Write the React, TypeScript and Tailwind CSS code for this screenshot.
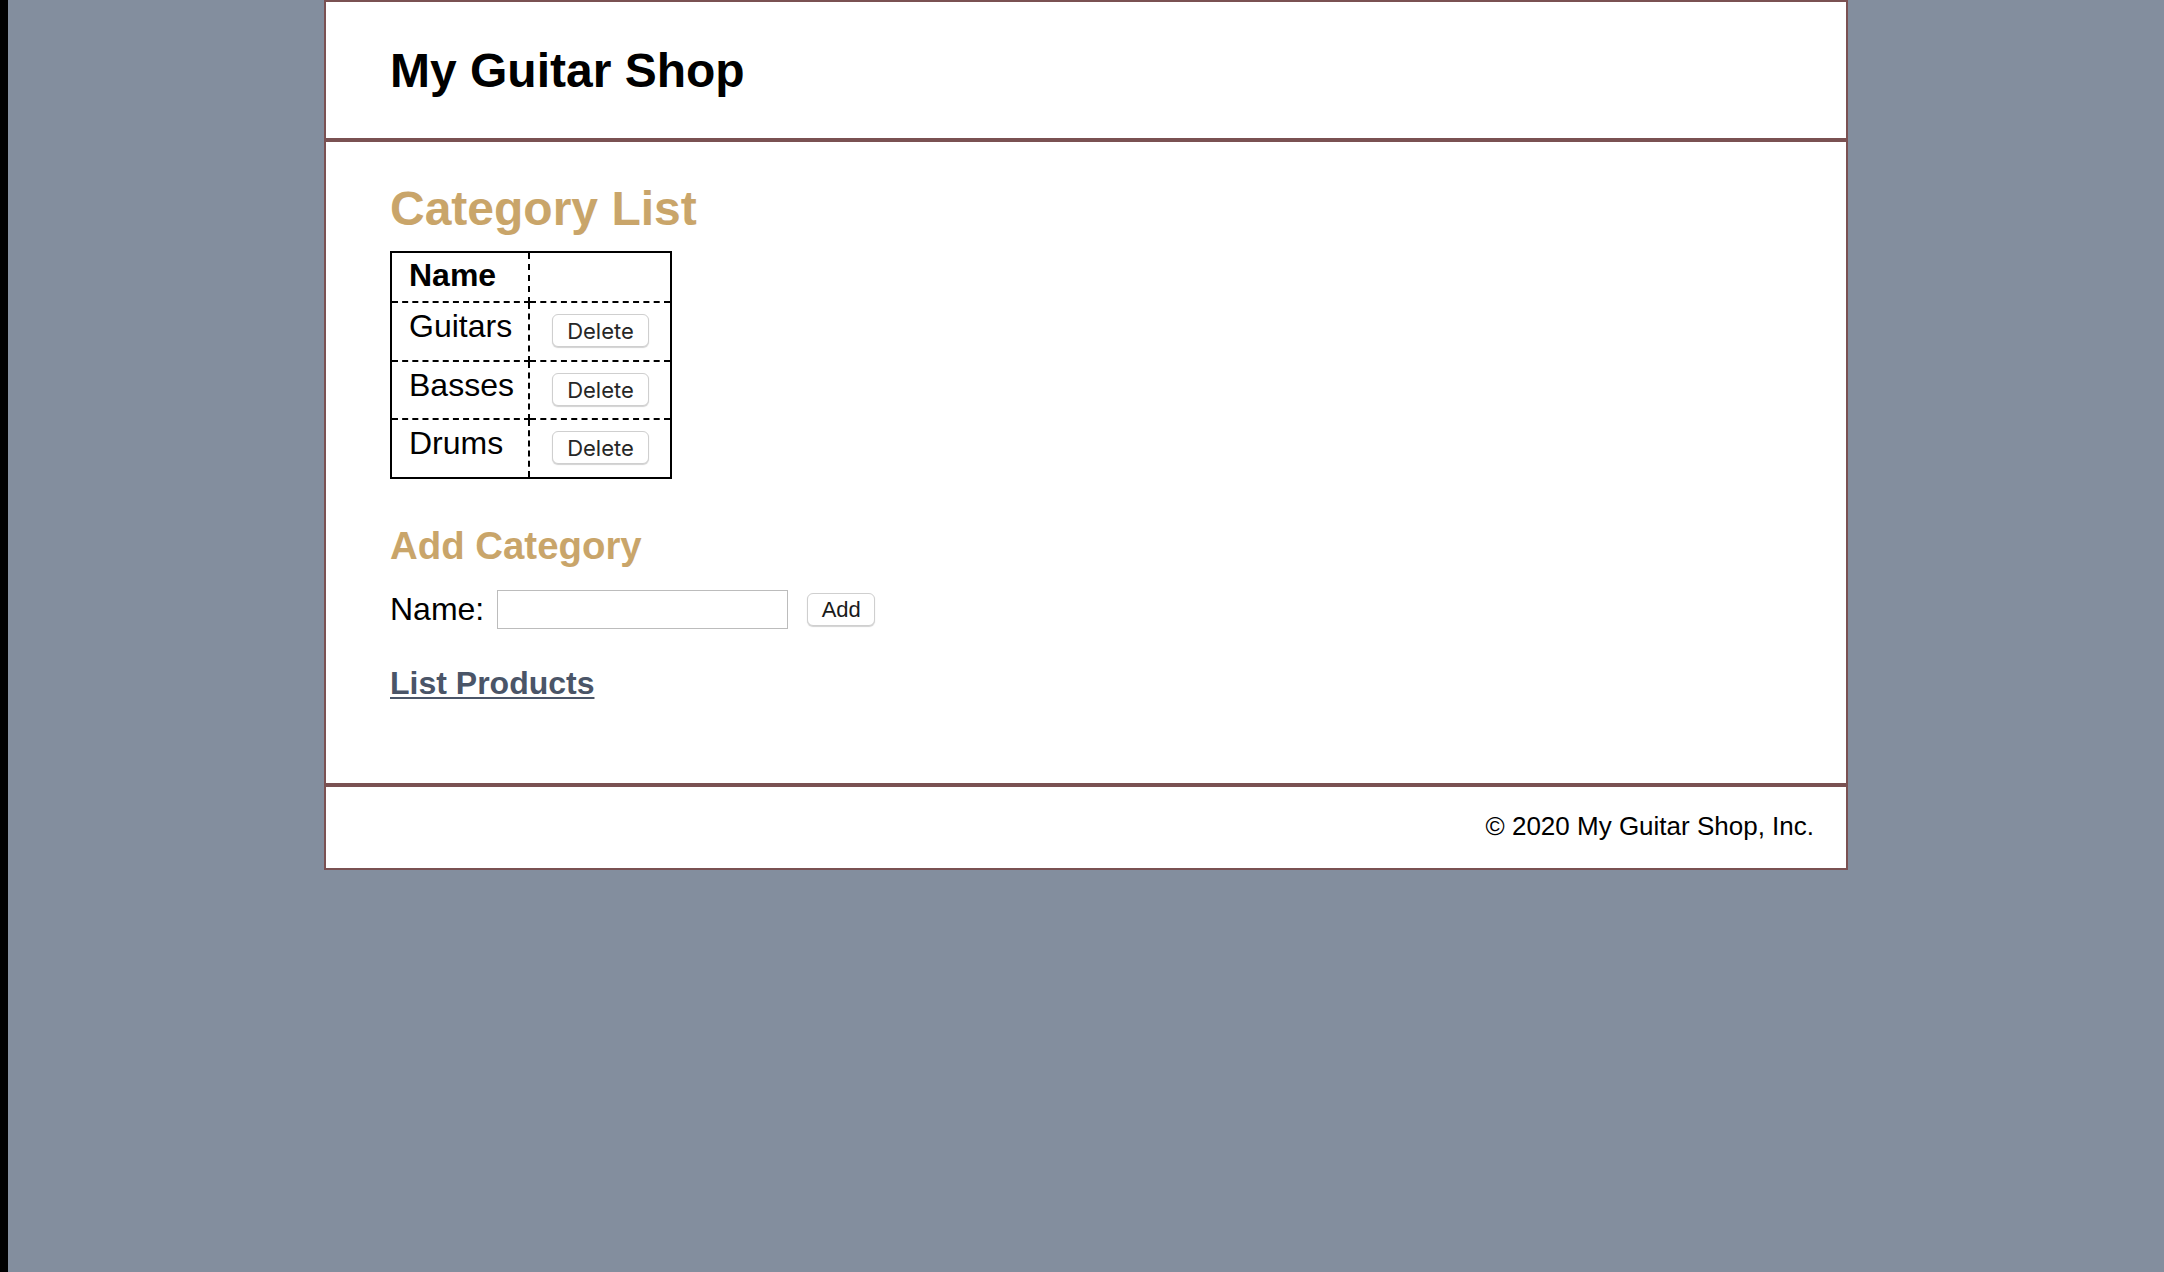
import React from 'react';

const categories = ['Guitars', 'Basses', 'Drums'];
const rowHeights = ['h-[59px]', 'h-[58px]', 'h-[57px]'];

const App: React.FC = () => {
  return (
    <div className="min-h-screen w-full flex bg-[#838e9e] font-['Liberation_Sans',Arial,sans-serif] text-black">
      {/* dark strip at the left edge */}
      <div className="w-[8px] shrink-0 bg-black" />

      <div className="flex-1 flex justify-center items-start">
        <div className="w-[1524px] bg-white border-2 border-[#7a5152]">
          {/* Header */}
          <header className="pl-[64px] pt-[41px] pb-[40px] border-b-4 border-[#7a5152]">
            <h1 className="text-[48px] leading-[55px] font-bold">My Guitar Shop</h1>
          </header>

          {/* Main */}
          <main className="pl-[64px] pt-[39px] pb-[81px] flex flex-col items-start">
            <h1 className="text-[48px] leading-[55px] font-bold text-[#c9a56a]">Category List</h1>

            <div className="mt-[15px] w-[282px] border-2 border-black grid grid-cols-[138px_140px] text-[32px] leading-[37px]">
              <div className="h-[50px] pl-[17px] pt-[4px] font-bold border-r-2 border-b-2 border-dashed border-black">
                Name
              </div>
              <div className="h-[50px] border-b-2 border-dashed border-black" />

              {categories.map((name, i) => {
                const last = i === categories.length - 1;
                return (
                  <React.Fragment key={name}>
                    <div
                      className={`${rowHeights[i]} pl-[17px] pt-[5px] border-r-2 border-dashed border-black ${last ? '' : 'border-b-2'}`}
                    >
                      {name}
                    </div>
                    <div
                      className={`${rowHeights[i]} pl-[22px] pt-[11px] ${last ? '' : 'border-b-2 border-dashed border-black'}`}
                    >
                      <button
                        type="button"
                        className="w-[97px] h-[33px] flex items-center justify-center rounded-[6px] border border-[#cfcfcf] bg-white shadow-[0_1px_1px_rgba(0,0,0,0.18)] font-['Inter',sans-serif] text-[22px] leading-none text-[#262626]"
                      >
                        Delete
                      </button>
                    </div>
                  </React.Fragment>
                );
              })}
            </div>

            <h2 className="mt-[45px] text-[38.4px] leading-[44px] font-bold text-[#c9a56a]">Add Category</h2>

            <form className="mt-[22px] flex items-center" onSubmit={(e) => e.preventDefault()}>
              <label className="text-[32px] leading-[37px]">Name:</label>
              <input
                type="text"
                className="ml-[13px] w-[291px] h-[39px] border border-[#bcbcbc] bg-white outline-none px-2 text-[26px]"
              />
              <button
                type="submit"
                className="ml-[19px] w-[68px] h-[33px] flex items-center justify-center rounded-[6px] border border-[#cfcfcf] bg-white shadow-[0_1px_1px_rgba(0,0,0,0.18)] text-[22px] leading-none text-[#1a1a1a]"
              >
                Add
              </button>
            </form>

            <a
              href="#"
              className="mt-[36px] text-[32px] leading-[37px] font-bold text-[#4a5568] underline decoration-2 underline-offset-[3px]"
            >
              List Products
            </a>
          </main>

          {/* Footer */}
          <footer className="border-t-4 border-[#7a5152] pt-[25px] pb-[27px] pr-[32px] text-right">
            <p className="text-[26px] leading-[29px]">© 2020 My Guitar Shop, Inc.</p>
          </footer>
        </div>
      </div>
    </div>
  );
};

export default App;
